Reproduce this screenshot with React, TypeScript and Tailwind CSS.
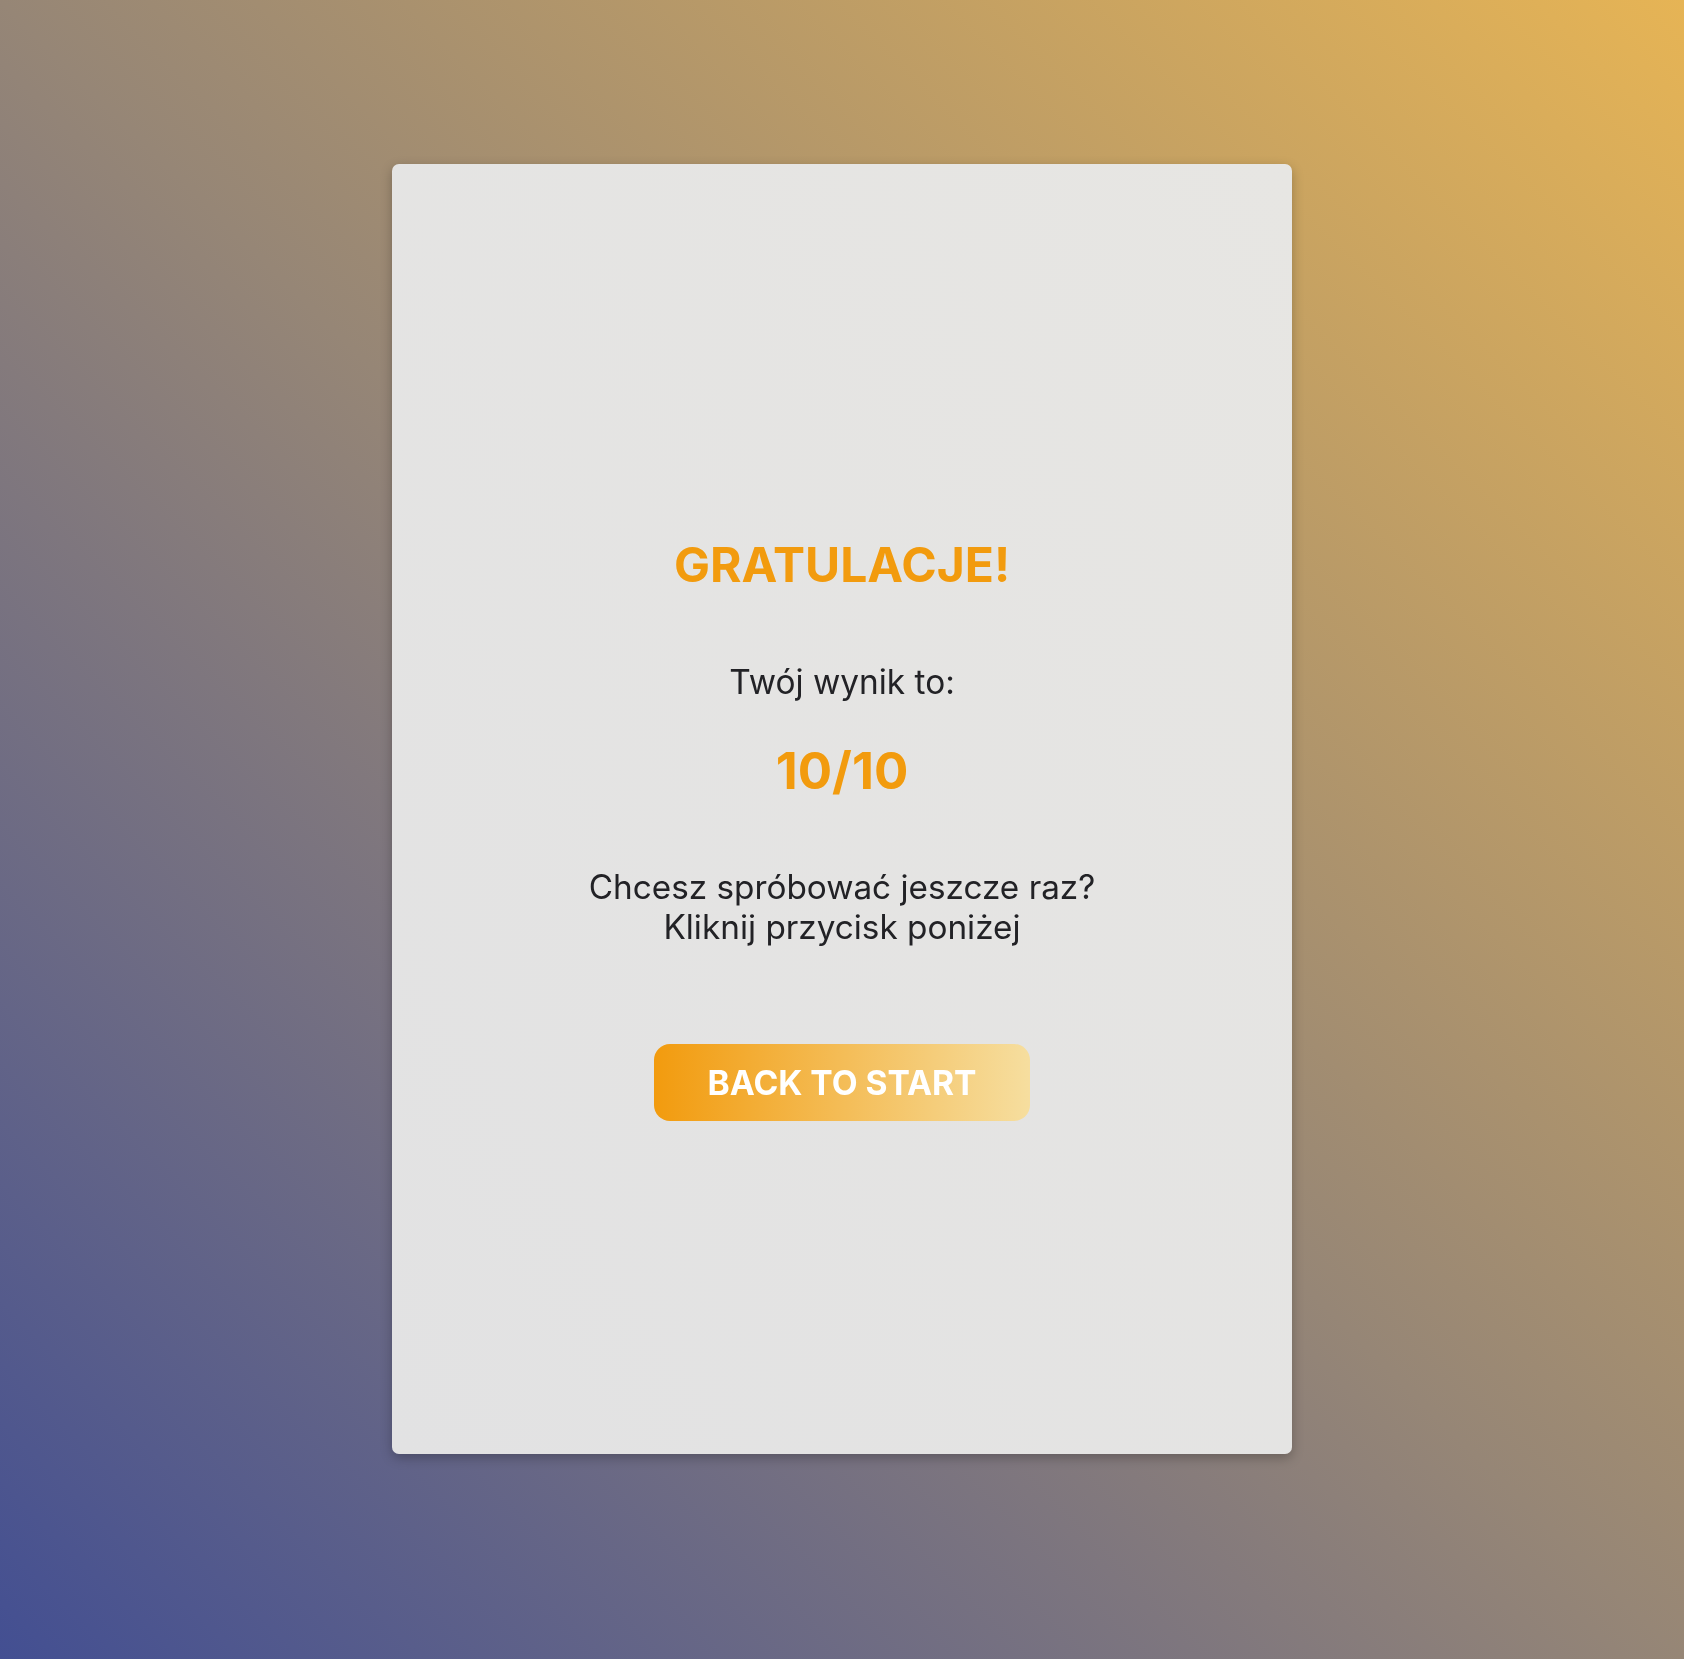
import React from "react";

export default function App() {
  return (
    <div
      className="min-h-[1659px] w-full pt-[164px]"
      style={{ fontFamily: "Inter, 'Noto Sans', sans-serif" }}
    >
      <div className="fixed inset-0 -z-10 bg-[linear-gradient(to_top_right,#434f92_0%,#968676_50%,#e6b455_100%)]" />
      <div className="mx-auto flex h-[1290px] w-[900px] flex-col items-center rounded-[7px] bg-[linear-gradient(to_top_right,#e2e2e3,#e7e6e3)] pt-[377px] shadow-[0_4px_12px_rgba(0,0,0,0.25)]">
        <h1 className="text-[48px] font-bold leading-none text-[#f29b0e]">GRATULACJE!</h1>
        <p className="mt-[77px] text-[33.4px] leading-none text-[#222226]">Twój wynik to:</p>
        <p className="mt-[46px] text-[51px] font-bold leading-none text-[#f29b0e]">10/10</p>
        <p className="mt-[71px] text-center text-[33.3px] leading-[40px] text-[#222226]">
          Chcesz spróbować jeszcze raz?
          <br />
          Kliknij przycisk poniżej
        </p>
        <button className="mt-[97px] flex h-[77px] w-[376px] items-center justify-center rounded-[16px] bg-[linear-gradient(to_right,#f29b0e,#f6de9f)] text-[33.6px] font-bold leading-none text-white">
          BACK TO START
        </button>
      </div>
    </div>
  );
}
